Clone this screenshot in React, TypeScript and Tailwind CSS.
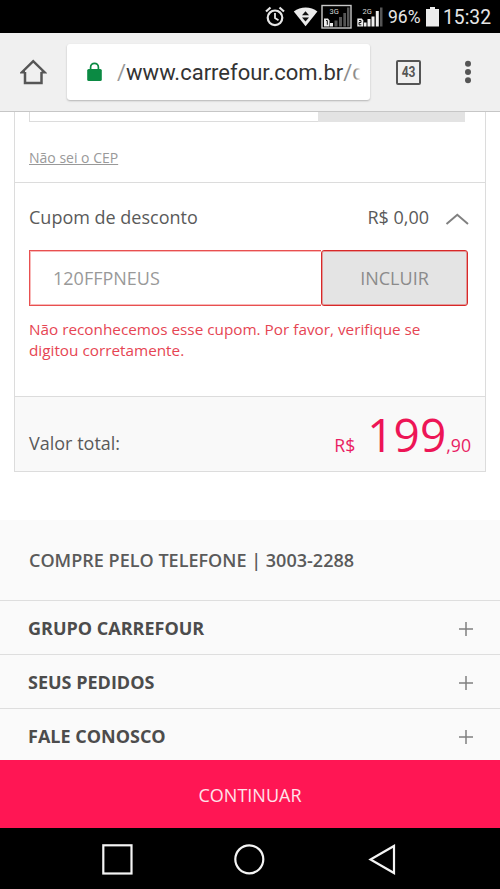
import React from 'react';

function StatusBar() {
  return (
    <header className="flex h-[33px] shrink-0 items-center bg-black pl-[265px] text-[#e6e6e6]">
      <svg className="h-[33px] w-[120px] shrink-0" viewBox="265 0 120 33" fill="none">
        <circle cx="275" cy="17.800" r="7.300" stroke="#e6e6e6" strokeWidth="2.200" />
        <path d="M275 13v5l3.500 2.200" stroke="#e6e6e6" strokeWidth="1.800" />
        <path d="M266 11.500l4.500-4M284 11.500l-4.500-4" stroke="#e6e6e6" strokeWidth="2.200" />
        <path d="M293.800 11.500C300.500 6.200 311 6.200 317.400 11.500L305.600 26.300Z" fill="#ececec" />
        <path d="M302 15.300l3.500-4 3.500 4zM302 17.500l3.500 4 3.500-4z" fill="#111" />
        <rect x="322" y="5.500" width="29" height="22.500" stroke="#c9c9c9" strokeWidth="1.400" />
        <path d="M334.500 26.500v-6h3v6zM339 26.500v-9.500h3v9.500zM343.300 26.500V13h2.700v13.500zM347 26.500V7.500h2.500v19z" fill="#555" />
        <path d="M324 18.500h4l1.500 2v6H324z" fill="#eee" />
        <path d="M326 20.500h1.300v4.300" stroke="#111" />
        <path d="M330 26.500v-3.500h3v3.500z" fill="#eee" />
        <text x="329.500" y="13.800" fontFamily="Roboto, sans-serif" fontSize="7.500" fill="#d8d8d8">3G</text>
        <path d="M357.300 18.500h4.500l1.500 2v6h-6z" fill="#eee" />
        <path d="M359 20.500h2v2h-2v2.300h2.300" stroke="#111" />
        <path d="M364 26.500v-4h2.500v4zM367.500 26.500V19h3v7.500zM371.500 26.500v-10h3v10zM375.800 26.500V11h3v15.500z" fill="#eee" />
        <path d="M380 26.500V7.500h2.500v19z" fill="#555" />
        <text x="362.500" y="13.800" fontFamily="Roboto, sans-serif" fontSize="7.500" fill="#d8d8d8">2G</text>
      </svg>
      <span className="ml-[3px] w-[38px] whitespace-nowrap pt-[2px] text-[17.500px] leading-none">96%</span>
      <svg className="h-[33px] w-[13px] shrink-0" viewBox="426 0 13 33">
        <path d="M430 7h5v2h4v17.500h-13V9h4z" fill="#ececec" />
      </svg>
      <span className="ml-[4px] whitespace-nowrap pt-[2px] text-[19.300px] leading-none">15:32</span>
    </header>
  );
}

function BrowserBar() {
  return (
    <div className="flex h-[79px] shrink-0 items-center border-b border-[#c6c6c6] bg-[#f0f0f0]">
      <svg className="ml-[20px] h-[28px] w-[27px]" viewBox="20 58 27 28" fill="none" stroke="#565656" strokeWidth="2.500">
        <path d="M25 72v11h16.500V72M25 72.200h-3L33.200 61.200 44.500 72.200h-3" />
      </svg>
      <div className="ml-[20px] flex h-[56px] w-[303px] items-center rounded-[3px] bg-white shadow-[0_1px_2px_rgba(0,0,0,0.25)]">
        <svg className="ml-[20px] h-[20px] w-[15px] shrink-0" viewBox="0 0 15 20" fill="none">
          <rect x="0.200" y="7" width="14.600" height="12" rx="1.500" fill="#0b8a43" />
          <path d="M3.600 8V5.200a3.900 3.900 0 0 1 7.800 0V8" stroke="#0b8a43" strokeWidth="1.700" />
        </svg>
        <div className="relative ml-[15px] w-[252px] whitespace-nowrap pt-px text-[22px] leading-[30px] text-[#333]">
          <span className="text-[#999]">/</span>www.carrefour.com.br<span className="text-[#8c8c8c]">/c</span>
          <span className="absolute top-0 right-0 h-[30px] w-[14px] bg-linear-to-r from-white/0 to-white to-40%" />
        </div>
      </div>
      <div className="ml-[26px] flex size-[25px] items-center justify-center rounded-[2px] border-2 border-[#555] text-[15px] font-bold leading-none text-[#555]">
        <span className="scale-x-[0.8]">43</span>
      </div>
      <svg className="ml-[43px] h-[24px] w-[8px]" viewBox="0 0 8 24" fill="#555">
        <circle cx="4" cy="3.700" r="3" />
        <circle cx="4" cy="12" r="3" />
        <circle cx="4" cy="20.300" r="3" />
      </svg>
    </div>
  );
}

function FooterRow({ label }: { label: string }) {
  return (
    <div className="flex h-[54px] shrink-0 items-center justify-between border-t border-[#dedede] pl-[28px] pr-[27px]">
      <span className="text-[18px] font-bold leading-none text-[#4c4c4c]">{label}</span>
      <svg className="mt-[3px] size-[14px]" viewBox="0 0 14 14" stroke="#808080" strokeWidth="1.500">
        <path d="M0 7h14M7 0v14" />
      </svg>
    </div>
  );
}

export default function App() {
  return (
    <div className="flex h-[889px] w-[500px] flex-col overflow-hidden bg-white font-[Roboto,sans-serif]">
      <StatusBar />
      <BrowserBar />
      <main className="flex h-[648px] shrink-0 flex-col overflow-hidden font-['Open_Sans',sans-serif] text-[#5a5a5a]">
        <section className="mx-[14px] flex h-[360px] shrink-0 flex-col border border-t-0 border-[#dcdcdc]">
          <div className="h-[71px] shrink-0 border-b border-[#dcdcdc] px-[14px]">
            <div className="flex h-[10px] w-[436px]">
              <div className="w-[289px] border-b border-l border-[#dcdcdc]" />
              <div className="flex-1 bg-[#e3e3e3]" />
            </div>
            <a className="mt-[25px] block w-fit text-[14px] leading-[21px] text-[#999] underline">Não sei o CEP</a>
          </div>
          <div className="flex h-[67px] shrink-0 items-center pl-[14px] pr-[16px] text-[18px] leading-none">
            <span>Cupom de desconto</span>
            <span className="ml-auto">R$ 0,00</span>
            <svg className="ml-[16px] mt-[5px] h-[12px] w-[24px]" viewBox="0 0 24 12" fill="none" stroke="#808080" strokeWidth="2">
              <path d="M1.500 11L12.300 1.800 23 11" />
            </svg>
          </div>
          <div className="ml-[14px] flex h-[56px] w-[439px] shrink-0 text-[18px] leading-none">
            <div className="flex w-[292px] items-center border border-r-0 border-[#e85050] pl-[23px] text-[#999] shadow-[inset_1px_1px_0_#f8b9b9,inset_0_-1px_0_#f8b9b9]">120FFPNEUS</div>
            <div className="flex flex-1 items-center justify-center rounded-[3px] border border-[#d82828] bg-[#e4e4e4] text-[#8b8b8b] shadow-[inset_0_0_0_1px_#e29a9a]">INCLUIR</div>
          </div>
          <p className="ml-[14px] mt-[13px] whitespace-nowrap text-[15.300px] leading-[21px] text-[#e64553]">
            Não reconhecemos esse cupom. Por favor, verifique se<br />digitou corretamente.
          </p>
          <div className="mt-auto flex h-[75px] shrink-0 items-baseline border-t border-[#dcdcdc] bg-[#f9f9f9] pl-[14px] pr-[14px]">
            <span className="-translate-y-[2px] text-[18px]">Valor total:</span>
            <span className="ml-auto text-[17.700px] text-[#e91e63]">R$</span>
            <span className="ml-[12px] text-[46px] leading-[74px] text-[#ed1556]">199</span>
            <span className="text-[17.700px] text-[#e91e63]">,90</span>
          </div>
        </section>
        <footer className="mt-[48px] flex h-[300px] shrink-0 flex-col bg-[#fafafa]">
          <div className="flex h-[80px] shrink-0 items-center pl-[29px] text-[18.050px] font-semibold leading-none">
            COMPRE PELO TELEFONE | 3003-2288
          </div>
          <FooterRow label="GRUPO CARREFOUR" />
          <FooterRow label="SEUS PEDIDOS" />
          <FooterRow label="FALE CONOSCO" />
        </footer>
      </main>
      <button className="flex h-[68px] shrink-0 items-center justify-center bg-[#ff1654] pt-[1px] font-['Open_Sans',sans-serif] text-[18px] leading-none text-[#ffe3ea]">
        CONTINUAR
      </button>
      <nav className="h-[61px] shrink-0 bg-black">
        <svg className="h-[61px] w-[500px]" viewBox="0 828 500 61" fill="none" stroke="#f4f4f4" strokeWidth="2.200">
          <rect x="103.300" y="845.300" width="28.200" height="28.200" />
          <circle cx="249.300" cy="859.300" r="14" />
          <path d="M394 846v27l-23.500-13.500z" />
        </svg>
      </nav>
    </div>
  );
}
